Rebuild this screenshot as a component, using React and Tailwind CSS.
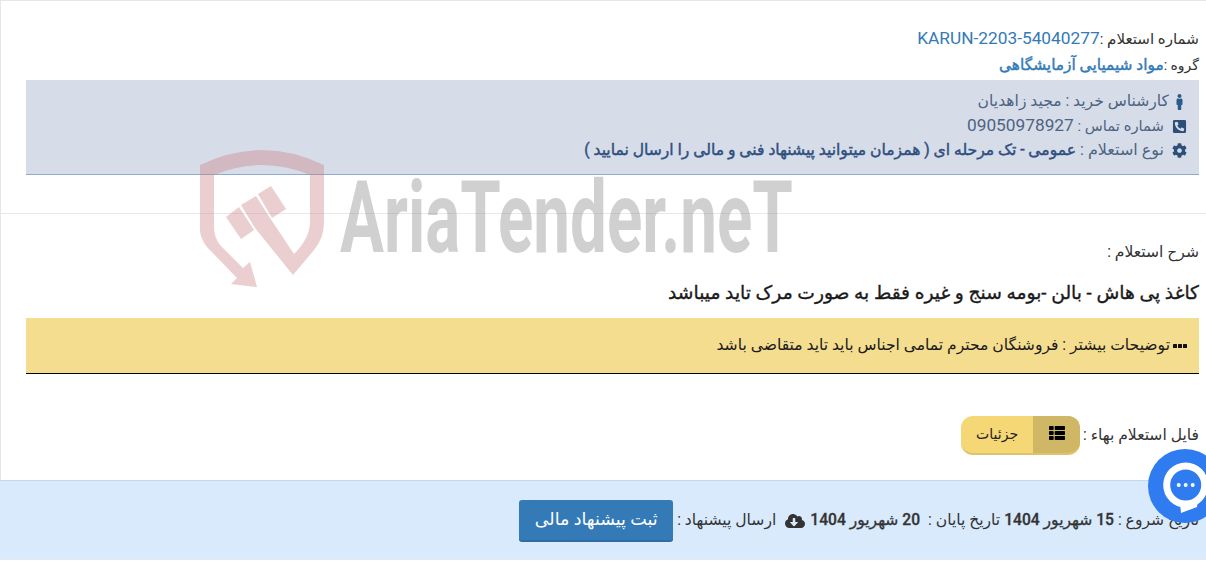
import React from "react";
import { FaMale, FaPhoneSquareAlt, FaCog, FaThList, FaCloudDownloadAlt } from "react-icons/fa";

function Watermark() {
  return (
    <svg dir="ltr" className="absolute left-[195px] top-[150px] pointer-events-none" width="620" height="145" viewBox="0 0 620 145">
      <g fill="#c9797e" opacity="0.36">
        <path d="M5 15 Q67 -15 129 15 L129 72 Q129 88 119 100 L98 125 L99 104 Q115 88 115 72 L115 25 Q67 5 19 25 L19 77 Q19 87 25 95 L48 118 L55 112 L62 137 L36 134 L42 128 L12 97 Q5 88 5 80 Z" />
        <path d="M46 55 L61 46 L75 68 L99 104 L103 112 L98 125 L60 78 Z" />
        <path d="M31 67 L44 57 L59 80 L46 89 Z" />
        <path d="M63 44 L76 36 L91 59 L77 68 Z" />
      </g>
      <g fill="#8c8c8c" opacity="0.4" fontFamily="Roboto, sans-serif" fontWeight="700">
        <text transform="translate(145 102) scale(0.655 1)" fontSize="100" direction="ltr">AriaTender.neT</text>
      </g>
    </svg>
  );
}

function ChatBubble() {
  return (
    <div className="absolute left-[1148px] top-[449px] w-[74px] h-[74px] rounded-full bg-[#2f7bf0] flex items-center justify-center">
      <svg width="50" height="54" viewBox="0 0 50 54">
        <path d="M20 44 L38 40 L37 48 L21 54 Z" fill="#ffffff" />
        <circle cx="25.7" cy="26" r="19" fill="#2f7bf0" stroke="#ffffff" strokeWidth="7" />
        <circle cx="18.7" cy="26" r="2" fill="#fff" />
        <circle cx="25.7" cy="26" r="2" fill="#fff" />
        <circle cx="32.7" cy="26" r="2" fill="#fff" />
      </svg>
    </div>
  );
}

export default function App() {
  return (
    <div dir="rtl" className="relative w-[1206px] h-[561px] overflow-hidden bg-white text-[#333] text-[15.6px] font-['Roboto','DejaVu_Sans',sans-serif]">
      <div className="h-[480px] border-t border-l border-[#e3e6ea]">
        <div className="px-[7px] pt-[25px]">
          <div className="h-[27px] leading-[25px]">
            <span className="text-[15.1px]">شماره استعلام :</span>
            <span className="text-[#337ab7] text-[17.3px]">KARUN-2203-54040277</span>
          </div>
          <div className="h-[27px] leading-[25px]">
            <span className="text-[14px]">گروه :</span>
            <span className="text-[#337ab7] text-[15.4px] [-webkit-text-stroke:0.45px_#337ab7]">مواد شیمیایی آزمایشگاهی</span>
          </div>
        </div>
        <div className="mr-[7px] ml-[25px] h-[95px] pt-[10px] pr-[12px] bg-[#d7dde8] border-b border-[#8fabc8] text-[#4d6484]">
          <div className="flex items-center gap-[3px] h-[24px]">
            <span className="w-[15px] flex justify-center"><FaMale className="text-[#2b5b8a] text-[16px]" /></span>
            <span>کارشناس خرید : مجید زاهدیان</span>
          </div>
          <div className="flex items-center gap-[8px] h-[24px]">
            <span className="w-[15px] flex justify-center"><FaPhoneSquareAlt className="text-[#2b4f78] text-[15px]" /></span>
            <span><span className="text-[14.8px]">شماره تماس : </span><span className="text-[17.3px]">09050978927</span></span>
          </div>
          <div className="flex items-center gap-[8px] h-[24px]">
            <span className="w-[15px] flex justify-center"><FaCog className="text-[#2b4f78] text-[15px]" /></span>
            <span><span className="text-[16px]">نوع استعلام : </span><span className="text-[15.6px] text-[#2f4f7f] [-webkit-text-stroke:0.45px_#2f4f7f]">عمومی - تک مرحله ای ( همزمان میتوانید پیشنهاد فنی و مالی را ارسال نمایید )</span></span>
          </div>
        </div>
        <div className="mt-[38px] border-t border-[#e8e8e8]" />
        <div className="px-[7px] mt-[28px]">
          <div className="h-[20px] leading-[20px]">شرح استعلام :</div>
          <div className="mt-[18px] h-[26px] leading-[26px] text-[18.7px] text-[#1a1a1a] [-webkit-text-stroke:0.35px_#1a1a1a]">کاغذ پی هاش - بالن -بومه سنج و غیره فقط به صورت مرک تاید میباشد</div>
        </div>
        <div className="mt-[12px] mr-[7px] ml-[25px] h-[56px] bg-[#f5dd90] border-b border-black flex items-center pr-[12px] text-[#1a1a1a] gap-[3px]">
          <svg width="14" height="4" viewBox="0 0 14 4" fill="#111"><rect x="0" width="4" height="4" rx="0.5" /><rect x="5" width="4" height="4" rx="0.5" /><rect x="10" width="4" height="4" rx="0.5" /></svg>
          <span>توضیحات بیشتر : فروشنگان محترم تمامی اجناس باید تاید متقاضی باشد</span>
        </div>
        <div className="mt-[42px] pr-[7px] flex items-center h-[40px]">
          <span className="ml-[3px]">فایل استعلام بهاء :</span>
          <div className="flex h-[39px] mb-[2px] rounded-[12px] overflow-hidden border-b-2 border-[#e0c368] bg-[#f5d776]">
            <div className="w-[47px] bg-[#cfb765] flex items-center justify-center pb-[2px]">
              <FaThList className="text-[16px] text-black" />
            </div>
            <div className="w-[72px] flex items-center justify-center text-[#222] text-[14px]">جزئیات</div>
          </div>
        </div>
      </div>
      <div className="h-[80px] pt-[1px] bg-[#d9eafd] border-t border-[#c4d9ec] border-b border-b-[#e8e8e8] flex items-center pr-[7px] whitespace-nowrap">
        <span>تاریخ شروع :</span>
        <span className="text-[15.6px] font-medium mr-[4px] [-webkit-text-stroke:0.3px_#333]">15 شهریور 1404</span>
        <span className="mr-[4px]">تاریخ پایان :</span>
        <span className="text-[15.6px] font-medium mr-[8px] [-webkit-text-stroke:0.3px_#333]">20 شهریور 1404</span>
        <FaCloudDownloadAlt className="text-[20px] mr-[5px]" />
        <span className="mr-[9px]">ارسال پیشنهاد :</span>
        <button className="mr-[4px] w-[154px] h-[42px] rounded-[3px] bg-[#337ab7] border-b-2 border-[#2e6da4] text-white text-[17.5px]">ثبت پیشنهاد مالی</button>
      </div>
      <Watermark />
      <ChatBubble />
    </div>
  );
}
